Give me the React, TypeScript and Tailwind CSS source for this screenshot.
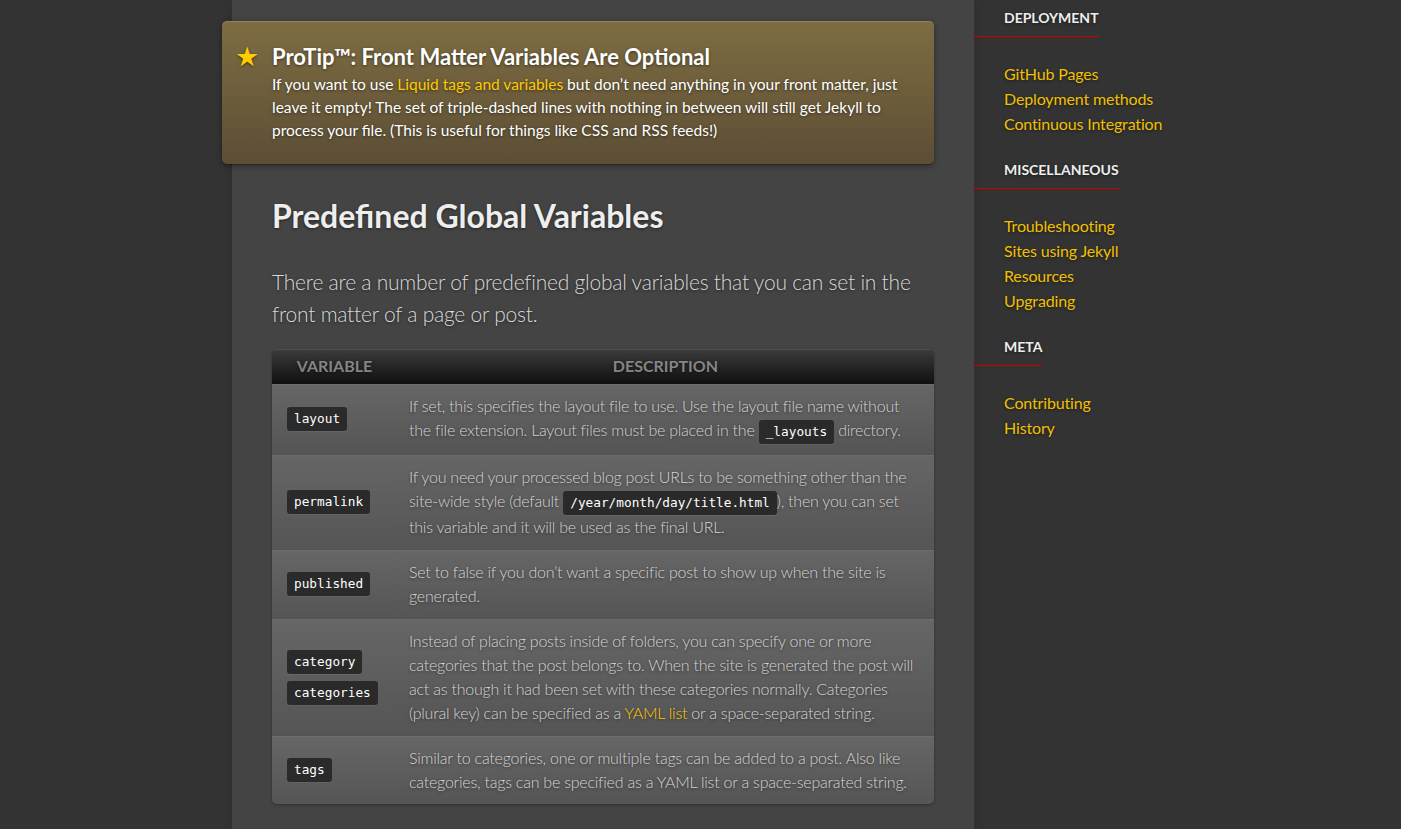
import React from "react";

const Code = ({ children }: { children: React.ReactNode }) => (
  <code className="inline-block rounded-[3px] bg-[#2a2a2a] px-[7px] py-[3px] font-['DejaVu_Sans_Mono',monospace] text-[12.75px] leading-[18px] tracking-normal text-white [text-shadow:none] shadow-[0_1px_0_rgba(255,255,255,0.06)]">
    {children}
  </code>
);

const Link = ({ children }: { children: React.ReactNode }) => (
  <a className="text-[#fc0]">{children}</a>
);

type Row = { vars: string[]; desc: React.ReactNode };

const rows: Row[] = [
  {
    vars: ["layout"],
    desc: (
      <>
        If set, this specifies the layout file to use. Use the layout file name without the file extension. Layout
        files must be placed in the <Code>_layouts</Code> directory.
      </>
    ),
  },
  {
    vars: ["permalink"],
    desc: (
      <>
        If you need your processed blog post URLs to be something other than the site-wide style (default{" "}
        <Code>/year/month/day/title.html</Code>), then you can set this variable and it will be used as the final URL.
      </>
    ),
  },
  {
    vars: ["published"],
    desc: <>Set to false if you don’t want a specific post to show up when the site is generated.</>,
  },
  {
    vars: ["category", "categories"],
    desc: (
      <>
        Instead of placing posts inside of folders, you can specify one or more categories that the post belongs to.
        When the site is generated the post will act as though it had been set with these categories normally.
        Categories (plural key) can be specified as a <Link>YAML list</Link> or a space-separated string.
      </>
    ),
  },
  {
    vars: ["tags"],
    desc: (
      <>
        Similar to categories, one or multiple tags can be added to a post. Also like categories, tags can be specified
        as a YAML list or a space-separated string.
      </>
    ),
  },
];

const sections = [
  { title: "Deployment", links: ["GitHub Pages", "Deployment methods", "Continuous Integration"] },
  { title: "Miscellaneous", links: ["Troubleshooting", "Sites using Jekyll", "Resources", "Upgrading"] },
  { title: "Meta", links: ["Contributing", "History"] },
];

export default function App() {
  return (
    <div className="h-[829px] overflow-hidden bg-[#333] font-[Lato,'Noto_Sans',sans-serif] text-[#ddd] [text-shadow:0_1px_3px_rgba(0,0,0,0.5)]">
      <div className="flex h-full pl-[232px]">
        <article className="w-[742px] shrink-0 bg-[#444] px-[40px] pt-[21px] shadow-[0_3px_10px_rgba(0,0,0,0.1)]">
          <div className="relative -ml-[50px] rounded-[5px] bg-linear-to-b from-[#7e6d42] to-[#5c4e35] pb-[22px] pl-[50px] pr-[20px] pt-[20px] shadow-[0_1px_1px_rgba(0,0,0,0.25),inset_0_1px_0_rgba(255,255,255,0.15),0_2px_6px_rgba(0,0,0,0.35)]">
            <span className="absolute left-[13px] top-[21px] font-['DejaVu_Sans',sans-serif] text-[27px] leading-[30px] text-[#fc0]">
              ★
            </span>
            <h5 className="text-[22px] font-bold leading-[32px] text-white">
              ProTip™: Front Matter Variables Are Optional
            </h5>
            <p className="text-[15.5px] font-normal leading-[23px] text-white">
              If you want to use <Link>Liquid tags and variables</Link> but don’t need anything in your front matter,
              just leave it empty! The set of triple-dashed lines with nothing in between will still get Jekyll to
              process your file. (This is useful for things like CSS and RSS feeds!)
            </p>
          </div>

          <h2 className="mt-[28px] text-[32px] font-bold leading-[48px] text-[#eee]">Predefined Global Variables</h2>
          <p className="mt-[26px] text-[21px] font-light leading-[31.5px] tracking-[-0.23px] text-[#d8d8d8]">
            There are a number of predefined global variables that you can set in the front matter of a page or post.
          </p>

          <div className="mt-[20px] overflow-hidden rounded-[5px] bg-[#555] shadow-[0_1px_3px_rgba(0,0,0,0.3)]">
            <table className="w-full border-collapse">
              <thead className="bg-linear-to-b from-[#3c3c3c] to-[#111]">
                <tr>
                  <th className="w-[125px] py-[8px] text-center text-[16px] font-bold uppercase leading-[18px] text-[#858585] shadow-[inset_0_1px_0_rgba(255,255,255,0.1)]">
                    Variable
                  </th>
                  <th className="py-[8px] text-center text-[16px] font-bold uppercase leading-[18px] text-[#858585] shadow-[inset_0_1px_0_rgba(255,255,255,0.1)]">
                    Description
                  </th>
                </tr>
              </thead>
              <tbody>
                {rows.map((r, i) => (
                  <tr key={i}>
                    <td className="w-[125px] border-t border-black/10 bg-linear-to-b from-white/10 to-white/0 py-[10px] pl-[15px] pr-[8px] align-middle shadow-[inset_0_1px_0_rgba(255,255,255,0.1)]">
                      <div className="flex flex-col items-start gap-[7px]">
                        {r.vars.map((v) => (
                          <Code key={v}>{v}</Code>
                        ))}
                      </div>
                    </td>
                    <td className="border-t border-black/10 bg-linear-to-b from-white/10 to-white/0 py-[10px] pl-[12px] pr-[12px] text-left align-top text-[16px] font-light leading-[24px] tracking-[-0.23px] text-[#d5d5d5] shadow-[inset_0_1px_0_rgba(255,255,255,0.1)]">
                      {r.desc}
                    </td>
                  </tr>
                ))}
              </tbody>
            </table>
          </div>
        </article>

        <aside className="flex-1 pt-[8px]">
          {sections.map((s) => (
            <div key={s.title}>
              <h4 className="w-fit border-b border-[#c00] pb-[8px] pl-[30px] text-[14px] font-bold uppercase leading-[20px] text-[#eee]">
                {s.title}
              </h4>
              <ul className="mb-[24px] mt-[24px] pl-[30px]">
                {s.links.map((l) => (
                  <li key={l} className="text-[16px] font-normal leading-[25px] tracking-[-0.15px]">
                    <a className="text-[#f0c000]">{l}</a>
                  </li>
                ))}
              </ul>
            </div>
          ))}
        </aside>
      </div>
    </div>
  );
}
